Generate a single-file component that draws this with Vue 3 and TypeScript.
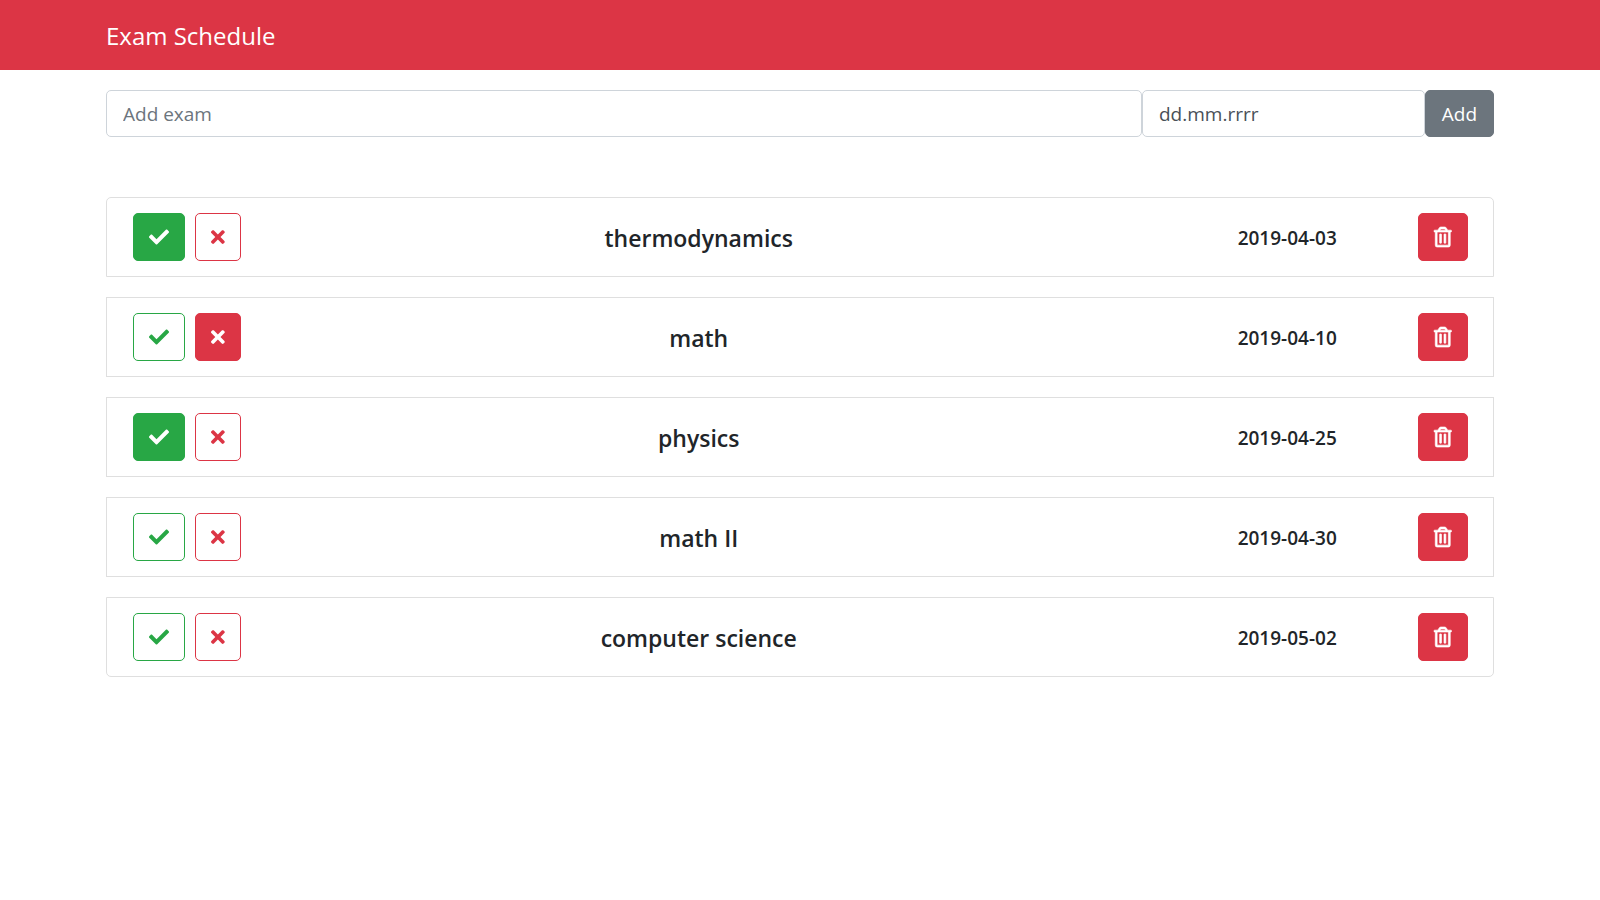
<script setup lang="ts">
import { ref } from 'vue'

type Status = 'passed' | 'failed' | null

interface Exam {
  id: number
  name: string
  date: string
  status: Status
}

const exams = ref<Exam[]>([
  { id: 1, name: 'thermodynamics', date: '2019-04-03', status: 'passed' },
  { id: 2, name: 'math', date: '2019-04-10', status: 'failed' },
  { id: 3, name: 'physics', date: '2019-04-25', status: 'passed' },
  { id: 4, name: 'math II', date: '2019-04-30', status: null },
  { id: 5, name: 'computer science', date: '2019-05-02', status: null },
])

const newName = ref('')
const newDate = ref('')

function toggle(exam: Exam, status: Status) {
  exam.status = exam.status === status ? null : status
}

function remove(id: number) {
  exams.value = exams.value.filter((exam) => exam.id !== id)
}

function add() {
  if (!newName.value || !newDate.value) return
  exams.value.push({ id: Date.now(), name: newName.value, date: newDate.value, status: null })
  newName.value = ''
  newDate.value = ''
}
</script>

<template>
  <div class="app">
    <header class="navbar">
      <a class="brand" href="#">Exam Schedule</a>
    </header>

    <main class="container">
      <form class="add-form" @submit.prevent="add">
        <input v-model="newName" class="field name-field" type="text" placeholder="Add exam" aria-label="Exam name" />
        <input v-model="newDate" class="field date-field" type="text" placeholder="dd.mm.rrrr" aria-label="Exam date" />
        <button class="add-button" type="submit">Add</button>
      </form>

      <ul class="exam-list">
        <li v-for="exam in exams" :key="exam.id" class="exam">
          <div class="actions">
            <button
              type="button"
              class="btn pass"
              :class="{ active: exam.status === 'passed' }"
              :aria-pressed="exam.status === 'passed'"
              aria-label="Passed"
              @click="toggle(exam, 'passed')"
            >
              <svg class="icon-check" viewBox="0 0 512 512" aria-hidden="true">
                <path d="M173.898 439.404l-166.4-166.4c-9.997-9.997-9.997-26.206 0-36.204l36.203-36.204c9.997-9.998 26.207-9.998 36.204 0L192 312.69 432.095 72.596c9.997-9.997 26.207-9.997 36.204 0l36.203 36.204c9.997 9.997 9.997 26.206 0 36.204l-294.4 294.401c-9.998 9.997-26.207 9.997-36.204-.001z" />
              </svg>
            </button>
            <button
              type="button"
              class="btn fail"
              :class="{ active: exam.status === 'failed' }"
              :aria-pressed="exam.status === 'failed'"
              aria-label="Failed"
              @click="toggle(exam, 'failed')"
            >
              <svg class="icon-times" viewBox="0 0 352 512" aria-hidden="true">
                <path d="M242.72 256l100.07-100.07c12.28-12.28 12.28-32.19 0-44.48l-22.24-22.24c-12.28-12.28-32.19-12.28-44.48 0L176 189.28 75.93 89.21c-12.28-12.28-32.19-12.28-44.48 0L9.21 111.45c-12.28 12.28-12.28 32.19 0 44.48L109.28 256 9.21 356.07c-12.28 12.28-12.28 32.19 0 44.48l22.24 22.24c12.28 12.28 32.2 12.28 44.48 0L176 322.72l100.07 100.07c12.28 12.28 32.2 12.28 44.48 0l22.24-22.24c12.28-12.28 12.28-32.19 0-44.48L242.72 256z" />
              </svg>
            </button>
          </div>
          <h5 class="exam-name">{{ exam.name }}</h5>
          <h6 class="exam-date">{{ exam.date }}</h6>
          <button type="button" class="btn delete" aria-label="Delete" @click="remove(exam.id)">
            <svg class="icon-trash" viewBox="0 0 448 512" aria-hidden="true">
              <path d="M268 416h24a12 12 0 0 0 12-12V188a12 12 0 0 0-12-12h-24a12 12 0 0 0-12 12v216a12 12 0 0 0 12 12zM432 80h-82.41l-34-56.7A48 48 0 0 0 274.41 0H173.59a48 48 0 0 0-41.16 23.3L98.41 80H16A16 16 0 0 0 0 96v16a16 16 0 0 0 16 16h16v336a48 48 0 0 0 48 48h288a48 48 0 0 0 48-48V128h16a16 16 0 0 0 16-16V96a16 16 0 0 0-16-16zM171.84 50.91A6 6 0 0 1 177 48h94a6 6 0 0 1 5.15 2.91L293.61 80H154.39zM368 464H80V128h288zm-212-48h24a12 12 0 0 0 12-12V188a12 12 0 0 0-12-12h-24a12 12 0 0 0-12 12v216a12 12 0 0 0 12 12z" />
            </svg>
          </button>
        </li>
      </ul>
    </main>
  </div>
</template>

<style>
body {
  margin: 0;
  background: #fff;
}
</style>

<style scoped>
.app {
  font-family: 'Segoe UI', 'Open Sans', 'Noto Sans', sans-serif;
  font-size: 19px;
  line-height: 30px;
  color: #212529;
}

.app *,
.app *::before {
  box-sizing: border-box;
}

.navbar {
  display: flex;
  align-items: center;
  height: 70px;
  padding: 2px 106px 0;
  background: #dc3545;
}

.brand {
  color: #fff;
  font-size: 24px;
  text-decoration: none;
}

.container {
  padding: 20px 106px;
}

.add-form {
  display: flex;
  height: 47px;
  margin-bottom: 60px;
}

.field {
  min-width: 0;
  padding: 0 16px;
  border: 1px solid #ced4da;
  border-radius: 5px;
  background: #fff;
  color: #495057;
  font: inherit;
}

.name-field {
  flex: 1;
}

.name-field::placeholder {
  color: #6c757d;
  opacity: 1;
}

.date-field {
  width: 283px;
}

.date-field::placeholder {
  color: #495057;
  opacity: 1;
}

.add-button {
  width: 69px;
  padding: 0;
  border: 1px solid #6c757d;
  border-radius: 5px;
  background: #6c757d;
  color: #fff;
  font: inherit;
  cursor: pointer;
}

.exam-list {
  display: flex;
  flex-direction: column;
  gap: 20px;
  margin: 0;
  padding: 0;
  list-style: none;
}

.exam {
  display: grid;
  grid-template-columns: auto 7fr 2fr auto;
  align-items: center;
  padding: 15px 25px 15px 26px;
  border: 1px solid #dfdfdf;
  background: #fff;
}

.exam:first-child {
  border-radius: 5px 5px 0 0;
}

.exam:last-child {
  border-radius: 0 0 5px 5px;
}

.actions {
  display: flex;
  gap: 10px;
}

.btn {
  display: flex;
  align-items: center;
  justify-content: center;
  height: 48px;
  padding: 0;
  border: 1px solid currentColor;
  border-radius: 5px;
  background: #fff;
  cursor: pointer;
}

.btn svg {
  display: block;
  height: 20px;
  fill: currentColor;
}

.btn .icon-trash {
  overflow: visible;
  stroke: currentColor;
  stroke-width: 16;
}

.pass {
  width: 52px;
  color: #28a745;
}

.pass.active {
  border-color: #28a745;
  background: #28a745;
  color: #fff;
}

.fail {
  width: 46px;
  color: #dc3545;
}

.fail.active,
.delete {
  border-color: #dc3545;
  background: #dc3545;
  color: #fff;
}

.delete {
  width: 50px;
}

.exam-name,
.exam-date {
  margin: 0;
  padding-top: 2px;
  font-weight: 600;
  text-align: center;
}

.exam-name {
  font-size: 23px;
}

.exam-date {
  font-size: 19px;
}
</style>
